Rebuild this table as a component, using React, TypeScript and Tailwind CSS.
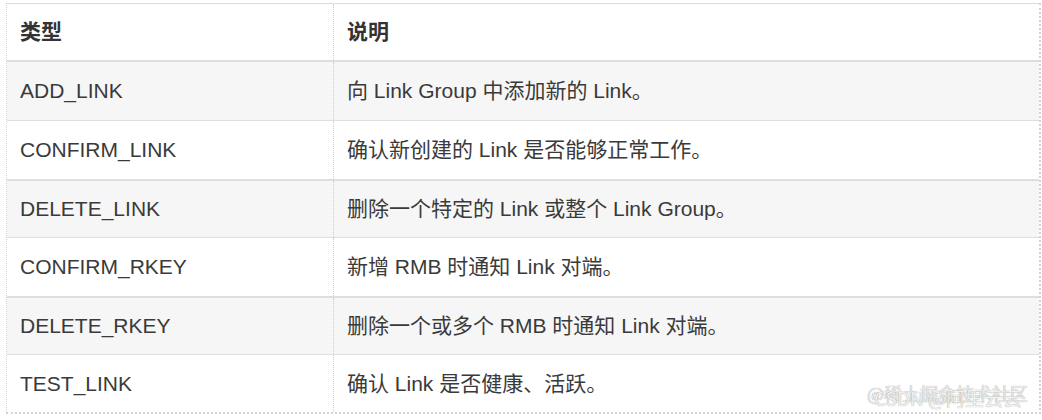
import React from "react";

const rows: [string, string][] = [
  ["ADD_LINK", "向 Link Group 中添加新的 Link。"],
  ["CONFIRM_LINK", "确认新创建的 Link 是否能够正常工作。"],
  ["DELETE_LINK", "删除一个特定的 Link 或整个 Link Group。"],
  ["CONFIRM_RKEY", "新增 RMB 时通知 Link 对端。"],
  ["DELETE_RKEY", "删除一个或多个 RMB 时通知 Link 对端。"],
  ["TEST_LINK", "确认 Link 是否健康、活跃。"],
];

export default function App() {
  return (
    <div
      className="w-[1042px] h-[420px] bg-white pl-[6px] pt-[3px] relative overflow-hidden"
      style={{ fontFamily: '"Liberation Sans", Arial, "Noto Sans CJK SC", sans-serif' }}
    >
      <div className="w-[1035px] border-l border-r-2 border-b-2 border-dotted border-[#d4d4d4] text-[21px] text-[#3a3a3a]">
        <div className="flex h-[59px] border-t border-[#dcdcdc] border-b-2 border-b-[#dedede] bg-white">
          <div className="w-[327px] shrink-0 flex items-center pl-[13px] font-bold text-[#333] border-r border-dotted border-[#cfcfcf]">
            类型
          </div>
          <div className="flex-1 flex items-center pl-[13px] font-bold text-[#333]">说明</div>
        </div>
        {rows.map(([a, b], i) => (
          <div
            key={a}
            className={
              "flex h-[58.4px] " +
              (i % 2 === 0 ? "bg-[#f6f6f6]" : "bg-white") +
              (i > 0 ? (i % 2 === 0 ? " border-t-2 border-[#dedede]" : " border-t border-[#dedede]") : "")
            }
          >
            <div className="w-[327px] shrink-0 flex items-center pl-[13px] border-r border-dotted border-[#cfcfcf]">
              {a}
            </div>
            <div className="flex-1 flex items-center pl-[13px]">{b}</div>
          </div>
        ))}
      </div>
      <div className="absolute left-[867px] top-[384px] text-[18px] leading-none text-[#e8e8e8] [text-shadow:0_0_1px_#9a9a9a]"
        style={{ fontFamily: '"Noto Sans CJK SC", sans-serif' }}>
        @稀土掘金技术社区
      </div>
      <div className="absolute left-[874px] top-[388px] text-[19px] leading-none text-[#f2f2f2] [text-shadow:0_0_1px_#8a8a8a]"
        style={{ fontFamily: '"Noto Sans CJK SC", sans-serif' }}>
        CSDN @阿里云云
      </div>
    </div>
  );
}
